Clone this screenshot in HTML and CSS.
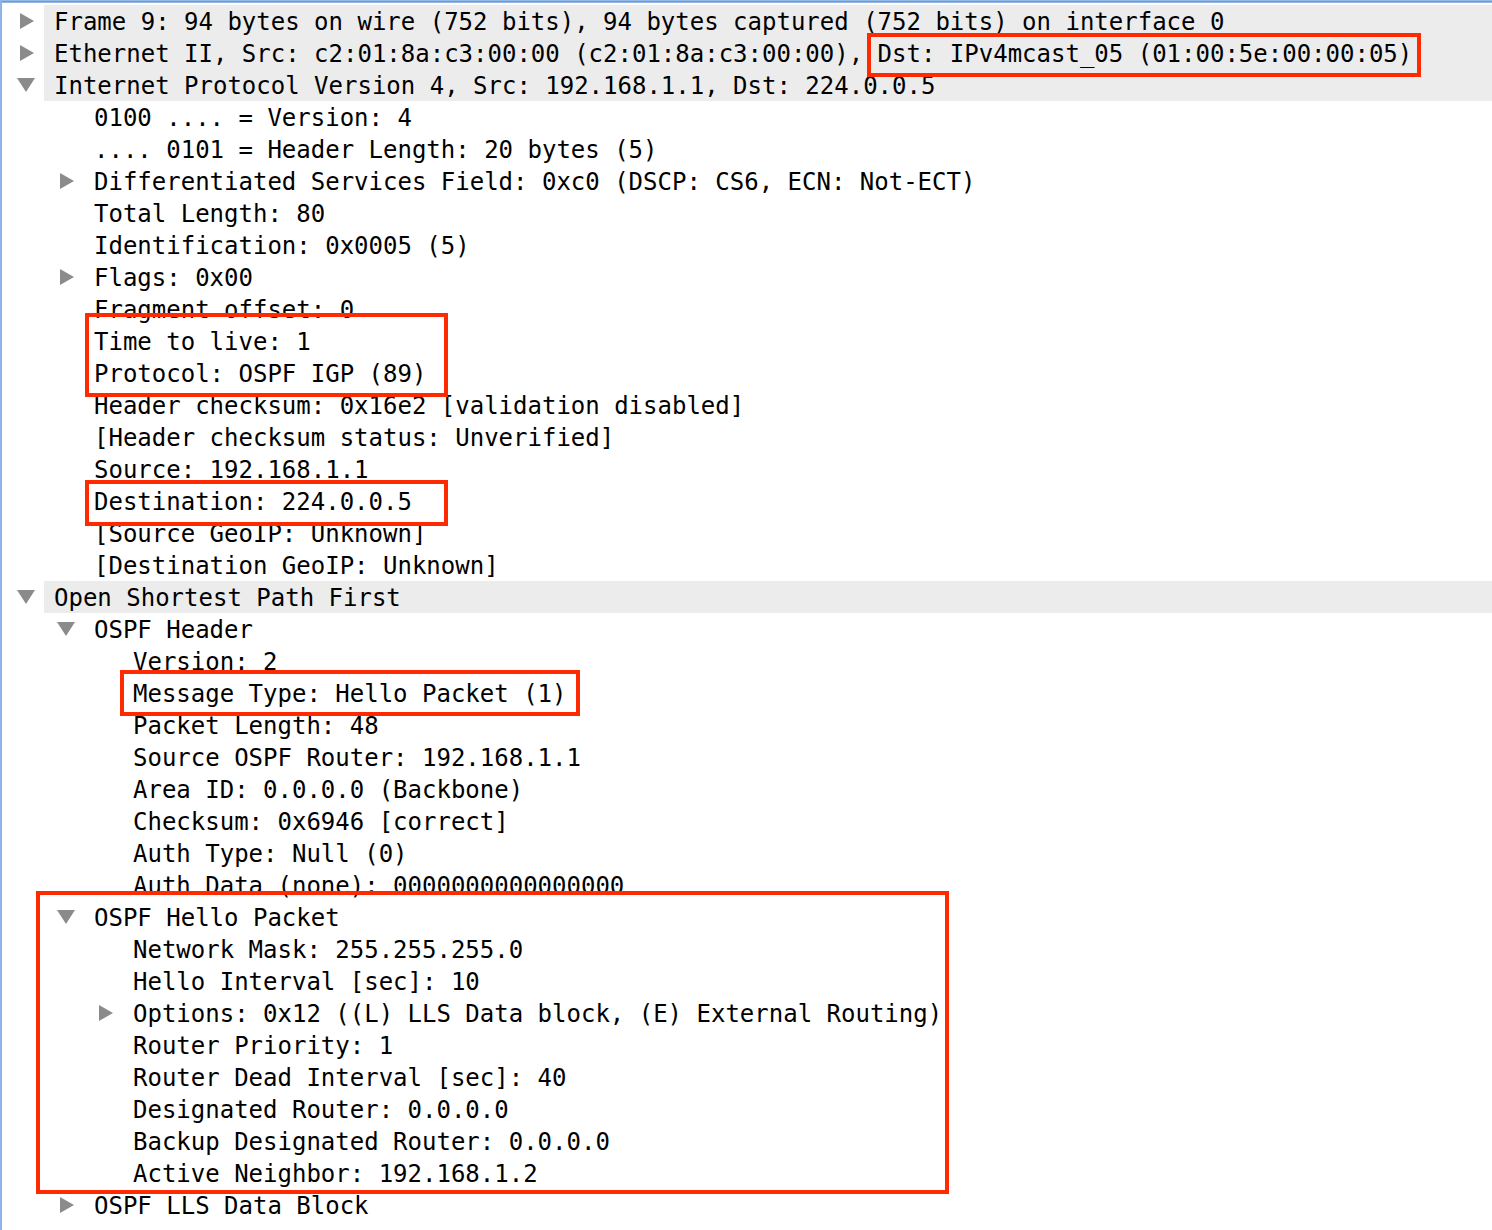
FILE: index.html
```html
<!DOCTYPE html>
<html>
<head>
<meta charset="utf-8">
<title>Packet details</title>
<link rel="stylesheet" href="styles.css">
</head>
<body>
<div class="window">
  <div class="topline"></div>
  <div class="tree">
    <div class="row l0 root"><span class="toggle"><svg viewBox="0 0 20 20"><polygon class="tri" points="3,2 17,10 3,18"/></svg></span><span class="label">Frame 9: 94 bytes on wire (752 bits), 94 bytes captured (752 bits) on interface 0</span></div>
    <div class="row l0 root"><span class="toggle"><svg viewBox="0 0 20 20"><polygon class="tri" points="3,2 17,10 3,18"/></svg></span><span class="label">Ethernet II, Src: c2:01:8a:c3:00:00 (c2:01:8a:c3:00:00), Dst: IPv4mcast_05 (01:00:5e:00:00:05)</span></div>
    <div class="row l0 root"><span class="toggle"><svg viewBox="0 0 20 20"><polygon class="tri" points="0,3 18,3 9,17"/></svg></span><span class="label">Internet Protocol Version 4, Src: 192.168.1.1, Dst: 224.0.0.5</span></div>
    <div class="row l1"><span class="toggle"></span><span class="label">0100 .... = Version: 4</span></div>
    <div class="row l1"><span class="toggle"></span><span class="label">.... 0101 = Header Length: 20 bytes (5)</span></div>
    <div class="row l1"><span class="toggle"><svg viewBox="0 0 20 20"><polygon class="tri" points="3,2 17,10 3,18"/></svg></span><span class="label">Differentiated Services Field: 0xc0 (DSCP: CS6, ECN: Not-ECT)</span></div>
    <div class="row l1"><span class="toggle"></span><span class="label">Total Length: 80</span></div>
    <div class="row l1"><span class="toggle"></span><span class="label">Identification: 0x0005 (5)</span></div>
    <div class="row l1"><span class="toggle"><svg viewBox="0 0 20 20"><polygon class="tri" points="3,2 17,10 3,18"/></svg></span><span class="label">Flags: 0x00</span></div>
    <div class="row l1"><span class="toggle"></span><span class="label">Fragment offset: 0</span></div>
    <div class="row l1"><span class="toggle"></span><span class="label">Time to live: 1</span></div>
    <div class="row l1"><span class="toggle"></span><span class="label">Protocol: OSPF IGP (89)</span></div>
    <div class="row l1"><span class="toggle"></span><span class="label">Header checksum: 0x16e2 [validation disabled]</span></div>
    <div class="row l1"><span class="toggle"></span><span class="label">[Header checksum status: Unverified]</span></div>
    <div class="row l1"><span class="toggle"></span><span class="label">Source: 192.168.1.1</span></div>
    <div class="row l1"><span class="toggle"></span><span class="label">Destination: 224.0.0.5</span></div>
    <div class="row l1"><span class="toggle"></span><span class="label">[Source GeoIP: Unknown]</span></div>
    <div class="row l1"><span class="toggle"></span><span class="label">[Destination GeoIP: Unknown]</span></div>
    <div class="row l0 root"><span class="toggle"><svg viewBox="0 0 20 20"><polygon class="tri" points="0,3 18,3 9,17"/></svg></span><span class="label">Open Shortest Path First</span></div>
    <div class="row l1"><span class="toggle"><svg viewBox="0 0 20 20"><polygon class="tri" points="0,3 18,3 9,17"/></svg></span><span class="label">OSPF Header</span></div>
    <div class="row l2"><span class="toggle"></span><span class="label">Version: 2</span></div>
    <div class="row l2"><span class="toggle"></span><span class="label">Message Type: Hello Packet (1)</span></div>
    <div class="row l2"><span class="toggle"></span><span class="label">Packet Length: 48</span></div>
    <div class="row l2"><span class="toggle"></span><span class="label">Source OSPF Router: 192.168.1.1</span></div>
    <div class="row l2"><span class="toggle"></span><span class="label">Area ID: 0.0.0.0 (Backbone)</span></div>
    <div class="row l2"><span class="toggle"></span><span class="label">Checksum: 0x6946 [correct]</span></div>
    <div class="row l2"><span class="toggle"></span><span class="label">Auth Type: Null (0)</span></div>
    <div class="row l2"><span class="toggle"></span><span class="label">Auth Data (none): 0000000000000000</span></div>
    <div class="row l1"><span class="toggle"><svg viewBox="0 0 20 20"><polygon class="tri" points="0,3 18,3 9,17"/></svg></span><span class="label">OSPF Hello Packet</span></div>
    <div class="row l2"><span class="toggle"></span><span class="label">Network Mask: 255.255.255.0</span></div>
    <div class="row l2"><span class="toggle"></span><span class="label">Hello Interval [sec]: 10</span></div>
    <div class="row l2"><span class="toggle"><svg viewBox="0 0 20 20"><polygon class="tri" points="3,2 17,10 3,18"/></svg></span><span class="label">Options: 0x12 ((L) LLS Data block, (E) External Routing)</span></div>
    <div class="row l2"><span class="toggle"></span><span class="label">Router Priority: 1</span></div>
    <div class="row l2"><span class="toggle"></span><span class="label">Router Dead Interval [sec]: 40</span></div>
    <div class="row l2"><span class="toggle"></span><span class="label">Designated Router: 0.0.0.0</span></div>
    <div class="row l2"><span class="toggle"></span><span class="label">Backup Designated Router: 0.0.0.0</span></div>
    <div class="row l2"><span class="toggle"></span><span class="label">Active Neighbor: 192.168.1.2</span></div>
    <div class="row l1"><span class="toggle"><svg viewBox="0 0 20 20"><polygon class="tri" points="3,2 17,10 3,18"/></svg></span><span class="label">OSPF LLS Data Block</span></div>
  </div>
  <div class="mark mark-dst"></div>
  <div class="mark mark-ttl"></div>
  <div class="mark mark-dest"></div>
  <div class="mark mark-msg"></div>
  <div class="mark mark-hello"></div>
</div>
</body>
</html>
```

FILE: styles.css
```css
html, body {
  margin: 0;
  padding: 0;
  background: #ffffff;
}

.window {
  position: relative;
  height: 1230px;
  box-sizing: border-box;
  border-left: 2px solid #8cb4e6;
  overflow: hidden;
  font-family: "DejaVu Sans Mono", "Liberation Mono", monospace;
  font-size: 24px;
  color: #000000;
}

.topline {
  height: 3px;
  background: linear-gradient(#a9c9ef, #6c9bd9 50%, #a6c6ee);
}

.tree {
  padding-top: 2px;
}

.row {
  display: flex;
  height: 32px;
}

.row.l1 { padding-left: 40px; }
.row.l2 { padding-left: 79px; }

.toggle {
  flex: 0 0 42px;
  display: flex;
  align-items: center;
}

.toggle svg {
  width: 20px;
  height: 20px;
  margin-left: 15px;
  display: block;
}

.tri {
  fill: #8b8b8b;
}

.label {
  flex: 1;
  box-sizing: border-box;
  height: 32px;
  padding-left: 10px;
  padding-top: 2px;
  line-height: 30px;
  white-space: pre;
}

.root .label {
  background: #ececec;
}

.mark {
  position: absolute;
  box-sizing: border-box;
  border: 4px solid #ff2a00;
}

.mark-dst   { left: 865px; top: 33px;  width: 554px; height: 44px; }
.mark-ttl   { left: 83px;  top: 313px; width: 363px; height: 84px; }
.mark-dest  { left: 83px;  top: 480px; width: 363px; height: 46px; }
.mark-msg   { left: 118px; top: 670px; width: 460px; height: 46px; }
.mark-hello { left: 34px;  top: 891px; width: 913px; height: 303px; }
```
